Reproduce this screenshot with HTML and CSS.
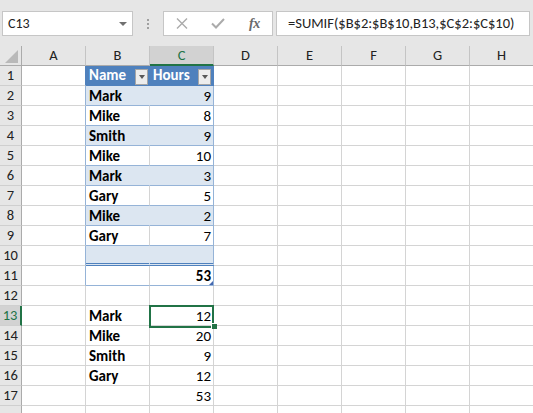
FILE: index.html
```html
<!DOCTYPE html>
<html>
<head>
<meta charset="utf-8">
<link rel="stylesheet" href="styles.css">
</head>
<body>
<div class="app">
  <div class="topbar">
    <div class="namebox"><span class="nb-text">C13</span><span class="nb-arrow"></span></div>
    <div class="dots"><i></i><i></i><i></i></div>
    <div class="fxbox">
      <svg class="ic-x" width="12" height="11" viewBox="0 0 12 11"><path d="M1 0.5 L11 10.5 M11 0.5 L1 10.5" stroke="#ababab" stroke-width="1.4" fill="none"/></svg>
      <svg class="ic-ok" width="14" height="11" viewBox="0 0 14 11"><path d="M1 5.5 L5 9.5 L13 1" stroke="#ababab" stroke-width="2" fill="none"/></svg>
      <span class="fx">fx</span>
    </div>
    <div class="formula">=SUMIF($B$2:$B$10,B13,$C$2:$C$10)</div>
  </div>

  <div class="sheet">
    <div class="row hdr">
      <div class="corner"></div>
      <div class="ch">A</div><div class="ch">B</div><div class="ch sel">C</div><div class="ch">D</div><div class="ch">E</div><div class="ch">F</div><div class="ch">G</div><div class="ch">H</div>
    </div>

    <div class="row">
      <div class="rh">1</div>
      <div class="c hA"></div>
      <div class="c th"><span>Name</span><span class="fb"></span></div>
      <div class="c th"><span>Hours</span><span class="fb"></span></div>
      <div class="c"></div><div class="c"></div><div class="c"></div><div class="c"></div><div class="c"></div>
    </div>
    <div class="row">
      <div class="rh">2</div>
      <div class="c eA"></div>
      <div class="c bd nb b">Mark</div>
      <div class="c bd tc r">9</div>
      <div class="c"></div><div class="c"></div><div class="c"></div><div class="c"></div><div class="c"></div>
    </div>
    <div class="row">
      <div class="rh">3</div>
      <div class="c eA"></div>
      <div class="c wt b">Mike</div>
      <div class="c wt tc r">8</div>
      <div class="c"></div><div class="c"></div><div class="c"></div><div class="c"></div><div class="c"></div>
    </div>
    <div class="row">
      <div class="rh">4</div>
      <div class="c eA"></div>
      <div class="c bd nb b">Smith</div>
      <div class="c bd tc r">9</div>
      <div class="c"></div><div class="c"></div><div class="c"></div><div class="c"></div><div class="c"></div>
    </div>
    <div class="row">
      <div class="rh">5</div>
      <div class="c eA"></div>
      <div class="c wt b">Mike</div>
      <div class="c wt tc r">10</div>
      <div class="c"></div><div class="c"></div><div class="c"></div><div class="c"></div><div class="c"></div>
    </div>
    <div class="row">
      <div class="rh">6</div>
      <div class="c eA"></div>
      <div class="c bd nb b">Mark</div>
      <div class="c bd tc r">3</div>
      <div class="c"></div><div class="c"></div><div class="c"></div><div class="c"></div><div class="c"></div>
    </div>
    <div class="row">
      <div class="rh">7</div>
      <div class="c eA"></div>
      <div class="c wt b">Gary</div>
      <div class="c wt tc r">5</div>
      <div class="c"></div><div class="c"></div><div class="c"></div><div class="c"></div><div class="c"></div>
    </div>
    <div class="row">
      <div class="rh">8</div>
      <div class="c eA"></div>
      <div class="c bd nb b">Mike</div>
      <div class="c bd tc r">2</div>
      <div class="c"></div><div class="c"></div><div class="c"></div><div class="c"></div><div class="c"></div>
    </div>
    <div class="row">
      <div class="rh">9</div>
      <div class="c eA"></div>
      <div class="c wt b">Gary</div>
      <div class="c wt tc r">7</div>
      <div class="c"></div><div class="c"></div><div class="c"></div><div class="c"></div><div class="c"></div>
    </div>
    <div class="row">
      <div class="rh">10</div>
      <div class="c eA"></div>
      <div class="c bd nb dbl"></div>
      <div class="c bd tc dbl"></div>
      <div class="c"></div><div class="c"></div><div class="c"></div><div class="c"></div><div class="c"></div>
    </div>
    <div class="row">
      <div class="rh">11</div>
      <div class="c eA"></div>
      <div class="c wt"></div>
      <div class="c wt tc r b tot">53</div>
      <div class="c"></div><div class="c"></div><div class="c"></div><div class="c"></div><div class="c"></div>
    </div>
    <div class="row">
      <div class="rh">12</div>
      <div class="c"></div><div class="c"></div><div class="c"></div>
      <div class="c"></div><div class="c"></div><div class="c"></div><div class="c"></div><div class="c"></div>
    </div>
    <div class="row">
      <div class="rh sel">13</div>
      <div class="c"></div>
      <div class="c b">Mark</div>
      <div class="c r active">12</div>
      <div class="c"></div><div class="c"></div><div class="c"></div><div class="c"></div><div class="c"></div>
    </div>
    <div class="row">
      <div class="rh">14</div>
      <div class="c"></div>
      <div class="c b">Mike</div>
      <div class="c r">20</div>
      <div class="c"></div><div class="c"></div><div class="c"></div><div class="c"></div><div class="c"></div>
    </div>
    <div class="row">
      <div class="rh">15</div>
      <div class="c"></div>
      <div class="c b">Smith</div>
      <div class="c r">9</div>
      <div class="c"></div><div class="c"></div><div class="c"></div><div class="c"></div><div class="c"></div>
    </div>
    <div class="row">
      <div class="rh">16</div>
      <div class="c"></div>
      <div class="c b">Gary</div>
      <div class="c r">12</div>
      <div class="c"></div><div class="c"></div><div class="c"></div><div class="c"></div><div class="c"></div>
    </div>
    <div class="row">
      <div class="rh">17</div>
      <div class="c"></div>
      <div class="c"></div>
      <div class="c r">53</div>
      <div class="c"></div><div class="c"></div><div class="c"></div><div class="c"></div><div class="c"></div>
    </div>
    <div class="row">
      <div class="rh"></div>
      <div class="c"></div><div class="c"></div><div class="c"></div>
      <div class="c"></div><div class="c"></div><div class="c"></div><div class="c"></div><div class="c"></div>
    </div>
  </div>
</div>
</body>
</html>
```
FILE: styles.css
```css
html, body {
  margin: 0;
  padding: 0;
  background: #ffffff;
}
body {
  width: 533px;
  height: 413px;
  overflow: hidden;
  font-family: "Carlito", "Lato", sans-serif;
  color: #000;
}
.app {
  width: 533px;
  height: 413px;
  overflow: hidden;
  background: #fff;
}

/* ---------- top bar ---------- */
.topbar {
  height: 46px;
  box-sizing: border-box;
  padding-top: 11px;
  background: #e6e6e6;
  display: flex;
  align-items: flex-start;
}
.namebox {
  margin-left: 2px;
  width: 131px;
  height: 25px;
  box-sizing: border-box;
  border: 1px solid #c6c6c6;
  background: #fff;
  display: flex;
  align-items: center;
  justify-content: space-between;
  padding: 0 5px 0 5px;
  font-size: 14px;
  color: #222;
}
.nb-arrow {
  width: 0;
  height: 0;
  border-left: 4px solid transparent;
  border-right: 4px solid transparent;
  border-top: 4px solid #707070;
}
.dots {
  width: 3px;
  margin-left: 14px;
  padding-top: 8px;
  display: flex;
  flex-direction: column;
  gap: 2px;
}
.dots i {
  display: block;
  width: 2px;
  height: 2px;
  background: #a0a0a0;
}
.fxbox {
  margin-left: 13px;
  width: 110px;
  height: 25px;
  box-sizing: border-box;
  border: 1px solid #c6c6c6;
  background: #fff;
  display: flex;
  align-items: center;
  padding-left: 12px;
}
.ic-x { margin-right: 23px; }
.ic-ok { margin-right: 24px; }
.fx {
  font-family: "Liberation Serif", serif;
  font-style: italic;
  font-weight: bold;
  font-size: 14px;
  color: #6a6a6a;
  letter-spacing: -0.5px;
}
.formula {
  margin-left: 3px;
  width: 254px;
  height: 25px;
  box-sizing: border-box;
  border: 1px solid #c6c6c6;
  background: #fff;
  padding-left: 11px;
  line-height: 23px;
  font-size: 14.5px;
  color: #222;
  white-space: nowrap;
  overflow: hidden;
}

/* ---------- sheet ---------- */
.sheet {
  display: flex;
  flex-direction: column;
}
.row {
  display: flex;
  height: 20px;
  flex: none;
}
.corner {
  position: relative;
  width: 22px;
  height: 20px;
  box-sizing: border-box;
  background: #e6e6e6;
  border-right: 1px solid #ababab;
  border-bottom: 1px solid #ababab;
  flex: none;
}
.corner::after {
  content: "";
  position: absolute;
  right: 3px;
  bottom: 2px;
  width: 0;
  height: 0;
  border-left: 13px solid transparent;
  border-bottom: 13px solid #b9b9b9;
}
.ch {
  width: 64px;
  height: 20px;
  box-sizing: border-box;
  flex: none;
  background: #e6e6e6;
  border-right: 1px solid #c4c4c4;
  border-bottom: 1px solid #ababab;
  text-align: center;
  font-size: 14.5px;
  line-height: 19px;
  color: #222;
}
.ch.sel {
  background: #d2d2d2;
  color: #217346;
  border-bottom: 2px solid #217346;
}
.rh {
  width: 22px;
  height: 20px;
  box-sizing: border-box;
  flex: none;
  background: #e6e6e6;
  border-right: 1px solid #ababab;
  border-bottom: 1px solid #cfcfcf;
  text-align: center;
  font-size: 14.5px;
  line-height: 19px;
  color: #222;
}
.rh.sel {
  background: #d2d2d2;
  color: #217346;
  border-right: 2px solid #217346;
}
.c {
  width: 64px;
  height: 20px;
  box-sizing: border-box;
  flex: none;
  border-right: 1px solid #d4d4d4;
  border-bottom: 1px solid #d4d4d4;
  padding: 0 2px 0 3px;
  font-size: 15px;
  line-height: 20px;
  white-space: nowrap;
  overflow: hidden;
}
.b { font-weight: bold; }
.r { text-align: right; }

/* table */
.hA { border-right-color: #4f81bd; }
.eA { border-right-color: #95b3d7; }
.th {
  background: #4f81bd;
  color: #fff;
  font-weight: bold;
  border-right-color: #4f81bd;
  border-bottom-color: #4f81bd;
  display: flex;
  justify-content: space-between;
  padding-right: 1px;
  line-height: 19px;
}
.fb {
  align-self: flex-end;
  width: 13px;
  height: 16px;
  box-sizing: border-box;
  background: #ededed;
  border: 1px solid #a6a6a6;
  display: flex;
  align-items: center;
  justify-content: center;
}
.fb::after {
  content: "";
  width: 0;
  height: 0;
  margin-top: -1px;
  border-left: 3.5px solid transparent;
  border-right: 3.5px solid transparent;
  border-top: 4px solid #595959;
}
.th + .th .fb { margin-right: 1px; }
.bd {
  background: #dce6f1;
  border-bottom-color: #95b3d7;
}
.bd.nb { border-right-color: #dce6f1; }
.wt { border-bottom-color: #95b3d7; }
.tc { border-right-color: #95b3d7; }
.dbl { border-bottom: 3px double #4f81bd; }
.tot { position: relative; }
.tot::after {
  content: "";
  position: absolute;
  right: 0;
  bottom: 0;
  width: 0;
  height: 0;
  border-left: 4px solid transparent;
  border-bottom: 4px solid #4468b0;
}

/* active cell */
.active {
  position: relative;
  overflow: visible;
}
.active::before {
  content: "";
  position: absolute;
  left: -1px;
  top: -1px;
  width: 65px;
  height: 23px;
  box-sizing: border-box;
  border: 2px solid #217346;
}
.active::after {
  content: "";
  position: absolute;
  left: 61px;
  top: 17px;
  width: 5px;
  height: 5px;
  background: #217346;
  border: 1px solid #fff;
  border-right: none;
  border-bottom: none;
}
```
